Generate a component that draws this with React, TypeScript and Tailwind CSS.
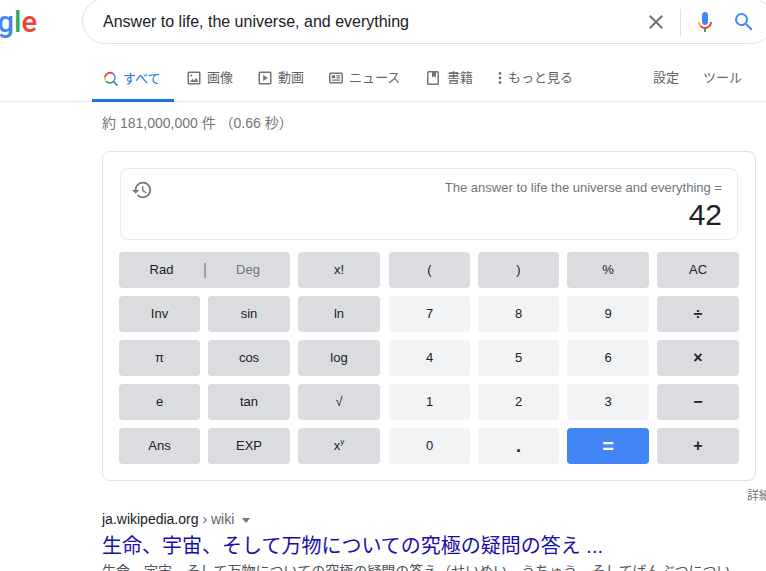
import type { ReactNode } from "react";

const CJK = "font-['Liberation_Sans','Noto_Sans_CJK_JP',sans-serif]";

function ColorSearch() {
  return (
    <svg viewBox="0 0 16 16" className="h-4 w-4" fill="none" strokeWidth="1.6">
      <path d="M2.3 9.2A5 5 0 0 1 2 6.6" stroke="#fbbc05" />
      <path d="M2 6.6A5 5 0 0 1 10.2 2.9" stroke="#ea4335" />
      <path d="M2.9 9.9A5 5 0 0 0 10.9 9.9" stroke="#34a853" />
      <path d="M10.2 2.9A5 5 0 0 1 10.9 9.9" stroke="#4285f4" />
      <path d="M10.6 10.6L14.6 14.6" stroke="#4285f4" strokeWidth="1.8" />
    </svg>
  );
}

function TabIcon({ children }: { children: ReactNode }) {
  return (
    <svg viewBox="0 0 16 16" className="h-4 w-4 shrink-0" fill="#70757a">
      {children}
    </svg>
  );
}

const imageIcon = (
  <TabIcon>
    <path fillRule="evenodd" d="M3 1.5h10A1.5 1.5 0 0 1 14.5 3v10a1.5 1.5 0 0 1-1.5 1.5H3A1.5 1.5 0 0 1 1.5 13V3A1.5 1.5 0 0 1 3 1.5zM3 3v10h10V3z" />
    <path d="M4 12l2.4-3.2 1.7 2 2.3-3L12.2 12z" />
    <circle cx="5.2" cy="5.4" r="1" />
  </TabIcon>
);

const videoIcon = (
  <TabIcon>
    <path fillRule="evenodd" d="M3 1.5h10A1.5 1.5 0 0 1 14.5 3v10a1.5 1.5 0 0 1-1.5 1.5H3A1.5 1.5 0 0 1 1.5 13V3A1.5 1.5 0 0 1 3 1.5zM3 3v10h10V3z" />
    <path d="M6.2 5l4.6 3-4.6 3z" />
  </TabIcon>
);

const newsIcon = (
  <TabIcon>
    <path fillRule="evenodd" d="M2.5 2.5h11A1.5 1.5 0 0 1 15 4v8a1.5 1.5 0 0 1-1.5 1.5h-11A1.5 1.5 0 0 1 1 12V4a1.5 1.5 0 0 1 1.5-1.5zm0 1.4v8.2h11V3.9z" />
    <path d="M3.8 5.2h3.4v3H3.8zM8.4 5.2h3.8v1.2H8.4zM8.4 7.2h3.8v1.2H8.4zM3.8 9.5h8.4v1.2H3.8z" />
  </TabIcon>
);

const bookIcon = (
  <TabIcon>
    <path fillRule="evenodd" d="M2.5 1h9A1.5 1.5 0 0 1 13 2.5v11a1.5 1.5 0 0 1-1.5 1.5h-9A1.5 1.5 0 0 1 1 13.5v-11A1.5 1.5 0 0 1 2.5 1zm0 1.4v11.2h9V2.4H10v5L8 6.2 6 7.4v-5z" />
  </TabIcon>
);

const tabs = [
  { label: "画像", icon: imageIcon, className: "ml-[12px] w-[71px]" },
  { label: "動画", icon: videoIcon, className: "w-[71px]" },
  { label: "ニュース", icon: newsIcon, className: "w-[98px]" },
  { label: "書籍", icon: bookIcon, className: "w-[72px]" },
];

const keys = [
  ["x!", "(", ")", "%", "AC"],
  ["Inv", "sin", "ln", "7", "8", "9", "÷"],
  ["π", "cos", "log", "4", "5", "6", "×"],
  ["e", "tan", "√", "1", "2", "3", "−"],
  ["Ans", "EXP", "xy", "0", ".", "=", "+"],
];

function Key({ label, col }: { label: string; col: number }) {
  const light = /^[0-9.]$/.test(label);
  const equals = label === "=";
  const symbol = ["÷", "×", "−", "+"].includes(label);
  return (
    <button
      className={
        "flex h-9 items-center justify-center rounded text-[#202124] " +
        (equals ? "bg-[#4285f4] text-[20px] font-bold text-white " : light ? "bg-[#f1f3f4] " : "bg-[#dadce0] ") +
        (symbol ? "text-[16px] font-bold " : "") +
        (label === "." ? "text-[18px] font-bold " : "") +
        (!symbol && !equals && label !== "." ? "text-[13px] " : "") +
        (col === 3 ? "ml-px" : "")
      }
    >
      {label === "xy" ? (
        <>
          x<sup className="text-[8px]">y</sup>
        </>
      ) : (
        label
      )}
    </button>
  );
}

export default function App() {
  return (
    <div className={"relative h-[571px] w-[766px] overflow-hidden bg-white " + CJK}>
      <header className="-mt-0.5 flex h-[46px]">
        <div className="flex w-[37px] shrink-0 justify-end overflow-hidden pt-px font-['Roboto'] text-[29px] font-medium leading-[46px]">
          <span className="shrink-0">
            <span className="text-[#4285f4]">G</span>
            <span className="text-[#ea4335]">o</span>
            <span className="text-[#fbbc05]">o</span>
            <span className="text-[#4285f4]">g</span>
            <span className="text-[#34a853]">l</span>
            <span className="text-[#ea4335]">e</span>
          </span>
        </div>
        <div className="ml-[45px] flex h-[46px] w-[692px] shrink-0 items-center rounded-3xl border border-[#dfe1e5] pl-5 pr-[17px] pt-[2px]">
          <span className="text-base text-[#202124]">Answer to life, the universe, and everything</span>
          <svg viewBox="0 0 24 24" className="ml-auto h-6 w-6" fill="#70757a">
            <path d="M19 6.41L17.59 5 12 10.59 6.41 5 5 6.41 10.59 12 5 17.59 6.41 19 12 13.41 17.59 19 19 17.59 13.41 12z" />
          </svg>
          <div className="ml-[12px] h-[27px] w-px bg-[#dfe1e5]" />
          <svg viewBox="0 0 24 24" className="ml-[12px] h-6 w-6">
            <path fill="#4285f4" d="m12 15c1.66 0 3-1.31 3-2.97v-7.02c0-1.66-1.34-3.01-3-3.01s-3 1.34-3 3.01v7.02c0 1.66 1.34 2.97 3 2.97z" />
            <path fill="#34a853" d="m11 18.08h2v3.92h-2z" />
            <path fill="#fbbc05" d="m7.05 16.87c-1.27-1.33-2.05-2.83-2.05-4.87h2c0 1.45 0.56 2.42 1.47 3.38v0.32l-1.15 1.18z" />
            <path fill="#ea4335" d="m12 16.93a4.97 5.25 0 0 1 -3.54 -1.55l-1.41 1.49c1.26 1.34 3.02 2.13 4.95 2.13 3.87 0 6.99-2.92 6.99-6.99h-2c0 2.92-2.24 4.92-4.99 4.92z" />
          </svg>
          <svg viewBox="0 0 24 24" className="ml-[15px] h-6 w-6" fill="#4285f4">
            <path d="M15.5 14h-.79l-.28-.27A6.471 6.471 0 0 0 16 9.5 6.5 6.5 0 1 0 9.5 16c1.61 0 3.09-.59 4.23-1.57l.27.28v.79l5 4.99L20.49 19l-4.99-5zm-6 0C7.01 14 5 11.99 5 9.5S7.01 5 9.5 5 14 7.01 14 9.5 11.99 14 9.5 14z" />
          </svg>
        </div>
      </header>

      <nav className="mt-[11px] flex h-[47px] border-b border-[#e8eaed] pl-[92px] text-[13px] text-[#5f6368]">
        <div className="flex h-[47px] w-[82px] items-center gap-[4px] border-b-[3px] border-[#1a73e8] pl-[11px] pt-[3px] text-[#1a73e8]">
          <ColorSearch />
          <span>すべて</span>
        </div>
        {tabs.map((t) => (
          <div key={t.label} className={"flex h-[46px] items-center gap-[5px] " + t.className}>
            {t.icon}
            <span>{t.label}</span>
          </div>
        ))}
        <div className="flex h-[46px] items-center gap-[6px]">
          <svg viewBox="0 0 4 16" className="h-4 w-1" fill="#70757a">
            <circle cx="2" cy="3.5" r="1.4" />
            <circle cx="2" cy="8" r="1.4" />
            <circle cx="2" cy="12.5" r="1.4" />
          </svg>
          <span>もっと見る</span>
        </div>
        <div className="ml-[80px] flex h-[46px] items-center">設定</div>
        <div className="ml-6 flex h-[46px] items-center">ツール</div>
      </nav>

      <main className="pl-[102px]">
        <p className="mt-[11px] text-sm leading-5 text-[#70757a]">約 181,000,000 件 （0.66 秒）</p>

        <section className="mt-[18px] h-[330px] w-[654px] rounded-lg border border-[#dfe1e5] pl-[16px] pt-[16px]">
          <div className="ml-[1px] flex h-[72px] w-[618px] items-start justify-between rounded-lg border border-[#e8eaed] pl-[10px] pr-[15px]">
            <svg viewBox="0 0 24 24" className="mt-[10px] h-[22px] w-[22px]" fill="#70757a">
              <path d="M13 3a9 9 0 0 0-9 9H1l3.89 3.89.07.14L9 12H6c0-3.87 3.13-7 7-7s7 3.13 7 7-3.13 7-7 7c-1.93 0-3.68-.79-4.94-2.06l-1.42 1.42A8.954 8.954 0 0 0 13 21a9 9 0 0 0 0-18zm-1 5v5l4.28 2.54.72-1.21-3.5-2.08V8H12z" />
            </svg>
            <div className="pt-[11px] text-right">
              <div className="text-[13px] leading-[16px] text-[#70757a]">The answer to life the universe and everything =</div>
              <div className="mt-[1px] text-[30px] leading-[36px] text-[#202124]">42</div>
            </div>
          </div>

          <div className="mt-[12px] grid grid-cols-[81px_82px_82px_82px_81px_82px_82px] gap-2">
            <div className="col-span-2 flex h-9 items-center rounded bg-[#dadce0] text-[13px] text-[#202124]">
              <span className="w-[85px] text-center">Rad</span>
              <span className="h-[15px] w-0.5 bg-[#9aa0a6]" />
              <span className="flex-1 text-center text-[#70757a]">Deg</span>
            </div>
            {keys.flatMap((row, r) =>
              row.map((k, c) => <Key key={k} label={k} col={r === 0 ? c + 2 : c} />),
            )}
          </div>
        </section>

        <div className="mt-[7px] w-[690px] text-xs leading-4 text-[#70757a]">
          <span className="ml-[645px] block w-[40px]">詳細</span>
        </div>

        <div className="mt-[5px] flex items-center text-sm leading-5 text-[#202124]">
          <span className="whitespace-pre">
            ja.wikipedia.org<span className="text-[#5f6368]"> › wiki</span>
          </span>
          <span className="ml-[8px] mt-0.5 h-0 w-0 border-x-[4.5px] border-t-[5px] border-x-transparent border-t-[#70757a]" />
        </div>
        <h3 className="mt-[4px] whitespace-nowrap text-xl leading-[26px] text-[#1a0dab]">
          生命、宇宙、そして万物についての究極の疑問の答え ...
        </h3>
        <p className="mt-[2px] whitespace-nowrap text-sm leading-5 text-[#4d5156]">
          生命、宇宙、そして万物についての究極の疑問の答え（せいめい、うちゅう、そしてばんぶつについ
        </p>
      </main>
    </div>
  );
}
